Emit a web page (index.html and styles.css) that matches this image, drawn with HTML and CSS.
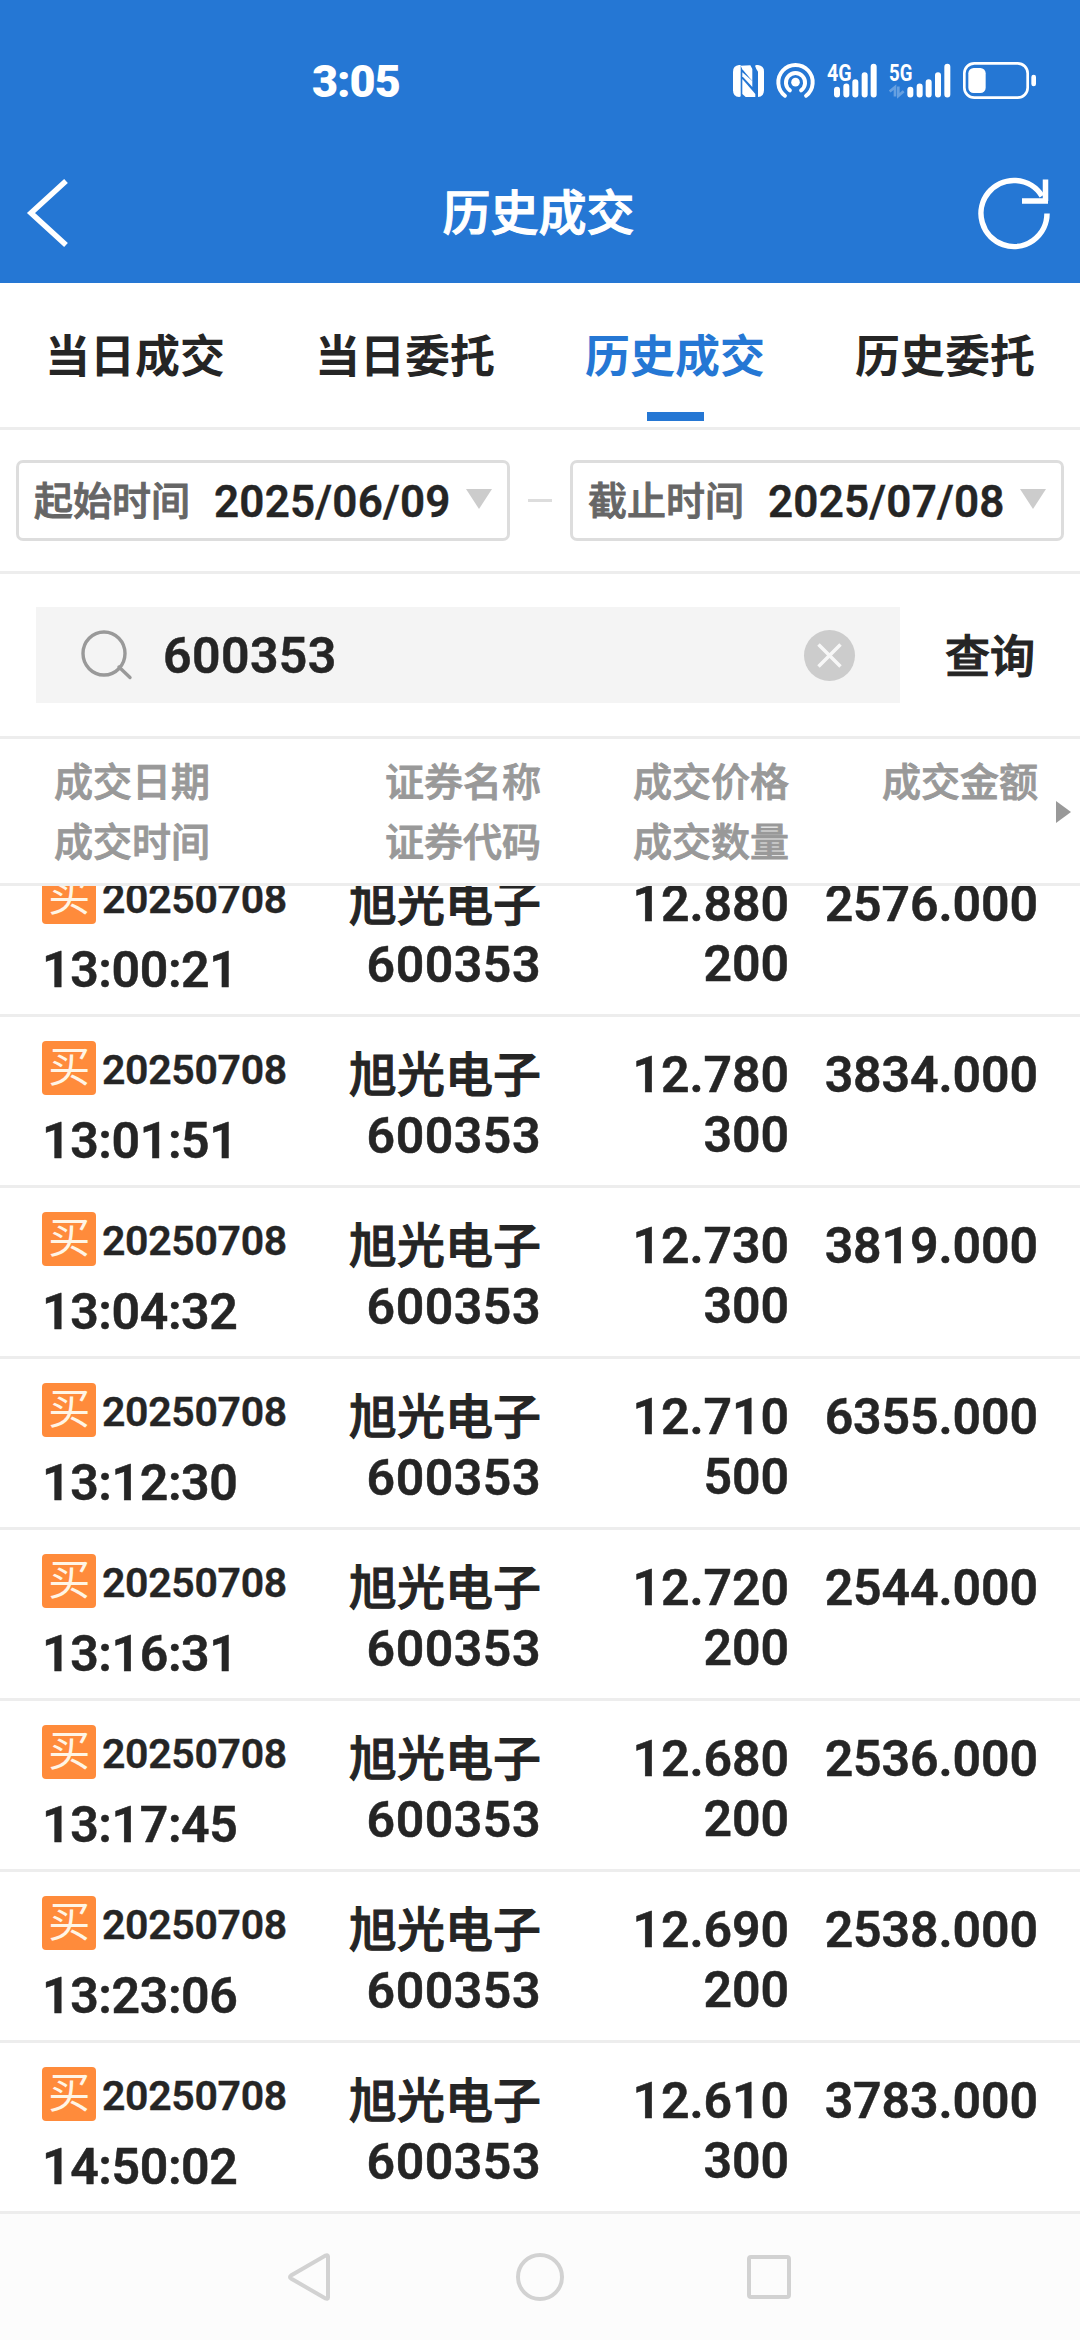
FILE: index.html
```html
<!doctype html>
<html lang="zh-CN">
<head>
<meta charset="utf-8" />
<meta name="viewport" content="width=device-width, initial-scale=1" />
<title>历史成交</title>
<link rel="stylesheet" href="styles.css">
</head>
<body>
<div class="app">
  <header class="top">
    <div class="statusbar">
      <span class="clock">3:05</span>
      <div class="sys">
        <!-- nfc -->
        <svg class="nfc" viewBox="0 0 93 96">
          <path fill="currentColor" d="M18 0H23V93Q23 96 18 96Q0 95 0 76V20Q0 2 18 0Z"/>
          <path fill="currentColor" d="M23 2L52 1L58 12V48L28 13Z"/>
          <path fill="currentColor" d="M58 48V66L28 34V22Z"/>
          <path fill="currentColor" d="M28 42L67 87V96H38L28 87Z"/>
          <path fill="currentColor" d="M70 0H75Q93 2 93 20V76Q93 95 75 96V20Q70 14 66 2Z"/>
        </svg>
        <!-- hotspot -->
        <svg class="hotspot" viewBox="0 0 118 104">
          <g fill="none" stroke="currentColor" stroke-width="12" stroke-linecap="round">
            <path d="M27 98A52 52 0 1 1 91 98"/>
            <path d="M42 82A29 29 0 1 1 76 82"/>
          </g>
          <circle cx="59" cy="57" r="13" fill="currentColor"/>
        </svg>
        <svg class="signal" viewBox="0 0 150 104">
          <text class="net" x="0" y="53" textLength="74" lengthAdjust="spacingAndGlyphs">4G</text>
          <g stroke="currentColor" stroke-width="18" stroke-linecap="round">
            <path d="M30 80V94M58 70V94M85 57V94M113 36V94M140 11V94"/>
          </g>
        </svg>
        <svg class="signal signal5" viewBox="0 0 186 104">
          <text class="net" x="0" y="53" textLength="70" lengthAdjust="spacingAndGlyphs">5G</text>
          <path d="M2 85L18 72V100M28 70V98L44 84" fill="none" stroke="currentColor" stroke-width="8" opacity=".3"/>
          <g stroke="currentColor" stroke-width="18" stroke-linecap="round">
            <path d="M64 80V94M92 70V94M119 57V94M147 36V94M175 11V94"/>
          </g>
        </svg>
        <!-- battery -->
        <svg class="battery" viewBox="0 0 219 111">
          <rect x="4" y="4" width="190" height="103" rx="30" fill="none" stroke="currentColor" stroke-width="8"/>
          <rect x="16" y="18" width="52" height="75" rx="16" fill="currentColor"/>
          <rect x="205" y="38" width="14" height="35" rx="7" fill="currentColor"/>
        </svg>
      </div>
    </div>
    <div class="titlebar">
      <svg class="back" viewBox="0 0 42 70"><path d="M39 3L4 35L39 67"/></svg>
      <h1>历史成交</h1>
      <svg class="refresh" viewBox="0 0 72 72"><path d="M69 36.5A33 33 0 1 1 64 19"/><path d="M67.5 2.5V24M44 24H70"/></svg>
    </div>
  </header>

  <nav class="tabs">
    <a class="tab">当日成交</a>
    <a class="tab">当日委托</a>
    <a class="tab active">历史成交</a>
    <a class="tab">历史委托</a>
  </nav>

  <div class="dates">
    <div class="date"><span class="lbl">起始时间</span><span class="val">2025/06/09</span><i class="caret"></i></div>
    <i class="dash"></i>
    <div class="date"><span class="lbl">截止时间</span><span class="val">2025/07/08</span><i class="caret"></i></div>
  </div>

  <div class="search">
    <div class="box">
      <svg class="glass" viewBox="0 0 52 50"><ellipse cx="23" cy="23.5" rx="21" ry="21.5"/><path d="M38 37L49 47.5"/></svg>
      <span class="query">600353</span>
      <svg class="clear" viewBox="0 0 51 51"><circle cx="25.5" cy="25.5" r="25.5"/><path d="M14.5 14.5L36.5 36.5M36.5 14.5L14.5 36.5"/></svg>
    </div>
    <span class="go">查询</span>
  </div>

  <div class="thead">
    <div>成交日期<br>成交时间</div>
    <div>证券名称<br>证券代码</div>
    <div>成交价格<br>成交数量</div>
    <div>成交金额</div>
    <i class="more"></i>
  </div>

  <div class="list">
    <div class="row">
      <div class="when"><div class="day"><b class="buy">买</b><span>20250708</span></div><div class="time">13:00:21</div></div>
      <div class="cell stock"><span class="name">旭光电子</span><br>600353</div>
      <div class="cell">12.880<br>200</div>
      <div class="cell">2576.000</div>
    </div>
    <div class="row">
      <div class="when"><div class="day"><b class="buy">买</b><span>20250708</span></div><div class="time">13:01:51</div></div>
      <div class="cell stock"><span class="name">旭光电子</span><br>600353</div>
      <div class="cell">12.780<br>300</div>
      <div class="cell">3834.000</div>
    </div>
    <div class="row">
      <div class="when"><div class="day"><b class="buy">买</b><span>20250708</span></div><div class="time">13:04:32</div></div>
      <div class="cell stock"><span class="name">旭光电子</span><br>600353</div>
      <div class="cell">12.730<br>300</div>
      <div class="cell">3819.000</div>
    </div>
    <div class="row">
      <div class="when"><div class="day"><b class="buy">买</b><span>20250708</span></div><div class="time">13:12:30</div></div>
      <div class="cell stock"><span class="name">旭光电子</span><br>600353</div>
      <div class="cell">12.710<br>500</div>
      <div class="cell">6355.000</div>
    </div>
    <div class="row">
      <div class="when"><div class="day"><b class="buy">买</b><span>20250708</span></div><div class="time">13:16:31</div></div>
      <div class="cell stock"><span class="name">旭光电子</span><br>600353</div>
      <div class="cell">12.720<br>200</div>
      <div class="cell">2544.000</div>
    </div>
    <div class="row">
      <div class="when"><div class="day"><b class="buy">买</b><span>20250708</span></div><div class="time">13:17:45</div></div>
      <div class="cell stock"><span class="name">旭光电子</span><br>600353</div>
      <div class="cell">12.680<br>200</div>
      <div class="cell">2536.000</div>
    </div>
    <div class="row">
      <div class="when"><div class="day"><b class="buy">买</b><span>20250708</span></div><div class="time">13:23:06</div></div>
      <div class="cell stock"><span class="name">旭光电子</span><br>600353</div>
      <div class="cell">12.690<br>200</div>
      <div class="cell">2538.000</div>
    </div>
    <div class="row">
      <div class="when"><div class="day"><b class="buy">买</b><span>20250708</span></div><div class="time">14:50:02</div></div>
      <div class="cell stock"><span class="name">旭光电子</span><br>600353</div>
      <div class="cell">12.610<br>300</div>
      <div class="cell">3783.000</div>
    </div>
  </div>

  <footer class="navbar">
    <svg viewBox="0 0 48 48"><path d="M41 3.5V44.5Q41 46.5 38.5 45.5L4 25.5Q2 24 4 22.5L38.5 2.5Q41 1.5 41 3.5Z"/></svg>
    <svg viewBox="0 0 48 48"><circle cx="24" cy="24" r="22"/></svg>
    <svg viewBox="0 0 48 48"><rect x="4" y="4" width="40" height="40" rx="2"/></svg>
  </footer>
</div>
</body>
</html>
```
FILE: styles.css
```css
:root{
--blue:#2577d4;
--text:#252525;
--line:#ededed;
--muted:#999;
}
*{box-sizing:border-box}
body{
margin:0;
font-family:Roboto,"Noto Sans CJK SC",sans-serif;
color:var(--text);
background:#fff;
}
svg{display:block; flex:none; overflow:visible}
.app{width:1080px; height:2340px; display:flex; flex-direction:column; overflow:hidden}

/* blue header */
.top{height:283px; background:var(--blue); color:#fff}
.statusbar{height:142px; padding:22px 44px 0 312px; display:flex; justify-content:space-between; align-items:flex-start}
.clock{font-size:45px; font-weight:900; line-height:119px; letter-spacing:-1px}
.sys{display:flex; align-items:flex-start; padding-top:40px}
.nfc{width:31px; height:32px; margin:3px 12px 0 0}
.hotspot{width:39px; height:35px; margin:1px 12px 0 0}
.signal{width:50px; height:35px; margin:1px 12px 0 0}
.signal5{width:62px}
.battery{width:73px; height:37px}
.net{font-size:70px; font-weight:700; fill:currentColor}
.titlebar{height:141px; padding:0 30px 0 27px; display:flex; justify-content:space-between; align-items:center}
.titlebar h1{margin:2px 0 0; font-size:48px; font-weight:500; line-height:60px; -webkit-text-stroke:1.1px}
.back{width:42px; height:70px; margin-right:30px}
.back path,.refresh path{fill:none; stroke:#fff; stroke-width:5.5}
.refresh{width:72px; height:72px}

.tabs{height:147px; display:flex; border-bottom:3px solid var(--line)}
.tab{
flex:1; display:flex; flex-direction:column; align-items:center;
padding-top:45px;
font-size:45px; font-weight:700; line-height:60px;
}
.tab.active{color:var(--blue)}
.tab.active::after{content:""; width:57px; height:9px; margin-top:24px; background:var(--blue)}

/* date range */
.dates{height:144px; padding:0 16px; display:flex; align-items:center; justify-content:space-between; border-bottom:3px solid var(--line)}
.date{
width:494px; height:81px; padding:0 15px 0 15px;
display:flex; align-items:center;
border:3px solid #ddd; border-radius:7px;
}
.lbl{font-size:39px; font-weight:500; line-height:60px; margin-top:3px; color:#666; -webkit-text-stroke:.9px}
.val{margin:2px 0 0 24px; font-size:44px; font-weight:600; line-height:60px; letter-spacing:.2px; -webkit-text-stroke:.4px}
.caret{margin:-3px 0 0 auto; border:13.5px solid transparent; border-top:20px solid #ccc; border-bottom:0}
.dash{width:24px; height:3px; background:#ddd}

.search{height:165px; padding:0 45px 0 36px; display:flex; align-items:center; border-bottom:3px solid var(--line)}
.box{width:864px; height:96px; padding:0 45px; display:flex; align-items:center; background:#f4f4f4}
.glass{width:52px; height:50px; fill:none; stroke:var(--muted); stroke-width:3.4; stroke-linecap:round}
.query{margin:2px 0 0 30px; font-size:50px; font-weight:600; line-height:60px; letter-spacing:.4px; -webkit-text-stroke:.5px}
.clear{width:51px; height:51px; margin-left:auto}
.clear circle{fill:#ccc}
.clear path{stroke:#f7f7f7; stroke-width:3.5}
.go{margin:5px 0 0 45px; font-size:45px; font-weight:500; line-height:60px; -webkit-text-stroke:1.1px}

/* table */
.thead,.row{display:grid; grid-template-columns:258px 241px 248px 249px; padding:0 42px; text-align:right}
.thead{
position:relative;
height:147px; padding-top:14px;
font-size:39px; font-weight:500; line-height:60px; color:var(--muted);
-webkit-text-stroke:.9px;
border-bottom:3px solid var(--line);
}
.thead div:first-child{text-align:left; padding-left:12px}
.more{position:absolute; right:9px; top:62px; border:11px solid transparent; border-left:15px solid var(--muted); border-right:0}
/* the list is scrolled, the first row slides under the table head */
.list{height:1328px; display:flex; flex-direction:column; justify-content:flex-end; overflow:hidden}
.row{height:171px; flex:none; border-bottom:3px solid var(--line)}
.cell{padding-top:28px; font-size:50px; font-weight:600; line-height:60px; letter-spacing:-.1px; -webkit-text-stroke:.5px}
.stock{letter-spacing:.5px}
.name{font-size:48px; font-weight:500; letter-spacing:0; -webkit-text-stroke:1px}
.when{padding-top:24px; text-align:left}
.day{height:54px; display:flex; font-size:41px; font-weight:600; line-height:58px; letter-spacing:-.3px}
.day span{-webkit-text-stroke:.4px}
.buy{
width:54px; height:54px; margin-right:6px;
border-radius:4px; background:#ff8b3b; color:#fff5e6;
font-size:42px; font-weight:400; line-height:54px; text-align:center;
}
.time{margin-top:16px; font-size:50px; font-weight:600; line-height:60px; letter-spacing:-.4px; -webkit-text-stroke:.5px}

.navbar{flex:1; display:flex; justify-content:center; align-items:center; gap:181px; background:#fcfcfc}
.navbar svg{width:48px; height:48px; fill:none; stroke:#d2d2d2; stroke-width:4}
```
